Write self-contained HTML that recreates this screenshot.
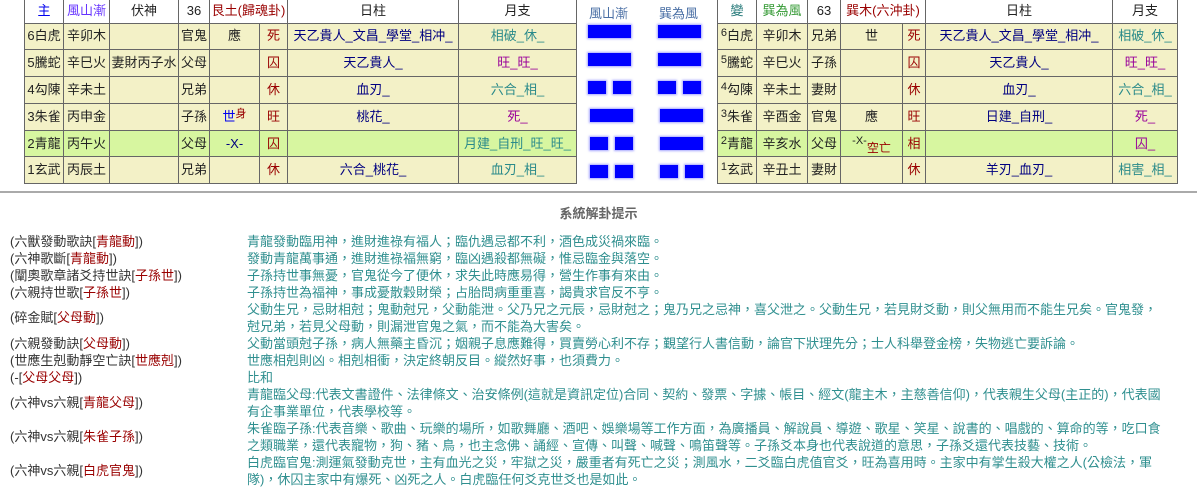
<!DOCTYPE html>
<html><head><meta charset="utf-8">
<style>
*{margin:0;padding:0;box-sizing:border-box}
body{width:1197px;height:485px;background:#fff;font-family:"Liberation Sans","Noto Sans CJK TC",sans-serif;font-size:13px;color:#222;position:relative;overflow:hidden}
table.g{position:absolute;top:-1px;border-collapse:collapse;table-layout:fixed}
table.g td{border:1px solid #666;text-align:center;height:26.8px;padding:0;white-space:nowrap;background:#f3f1c7;line-height:14px}
table.g tr.h td{background:#fff;height:24px;border-top:none}
table.g tr.gr td{background:#d7f6a0}
.b{color:#0000ee}.p{color:#6633ff}.r{color:#990000}.n{color:#000080}.t{color:#2a8a8a}.m{color:#990099}.gn{color:#339933}.tl{color:#227777}
sup{font-size:11px;vertical-align:4px;line-height:0}
sub{font-size:12px;vertical-align:-4px;line-height:0}
.bar{position:absolute;height:13px;background:#0000ff;box-shadow:0 0 2px 1px rgba(80,80,255,.5)}
.ht{position:absolute;top:3px;color:#4a6fa5;font-size:13px}
hr{position:absolute;left:0;top:191px;width:1197px;border:none;border-top:2px solid #aaa}
.tt{position:absolute;top:203px;left:0;width:1197px;text-align:center;font-weight:bold;color:#666;font-size:13px}
.lab{position:absolute;left:10px;color:#333;line-height:17px;white-space:nowrap}
.lab span{color:#990000}
.txt{position:absolute;left:247px;top:233px;color:#2f8f8f;line-height:17px;white-space:nowrap}
</style></head><body>
<table class="g" style="left:24px;width:552px">
<colgroup><col style="width:39px"><col style="width:46px"><col style="width:69px"><col style="width:31px"><col style="width:50px"><col style="width:28px"><col style="width:171px"><col style="width:118px"></colgroup>
<tr class="h"><td class="b">主</td><td class="p">風山漸</td><td>伏神</td><td>36</td><td colspan="2" class="r">艮土(歸魂卦)</td><td>日柱</td><td>月支</td></tr>
<tr><td>6白虎</td><td>辛卯木</td><td></td><td>官鬼</td><td>應</td><td class="r">死</td><td class="n">天乙貴人_文昌_學堂_相冲_</td><td class="t">相破_休_</td></tr>
<tr><td>5騰蛇</td><td>辛巳火</td><td>妻財丙子水</td><td>父母</td><td></td><td class="r">囚</td><td class="n">天乙貴人_</td><td class="m">旺_旺_</td></tr>
<tr><td>4勾陳</td><td>辛未土</td><td></td><td>兄弟</td><td></td><td class="r">休</td><td class="n">血刃_</td><td class="t">六合_相_</td></tr>
<tr><td>3朱雀</td><td>丙申金</td><td></td><td>子孫</td><td><span class="b">世</span><sup class="r">身</sup></td><td class="r">旺</td><td class="n">桃花_</td><td class="m">死_</td></tr>
<tr class="gr"><td>2青龍</td><td>丙午火</td><td></td><td>父母</td><td class="n">-X-</td><td class="r">囚</td><td></td><td class="t">月建_自刑_旺_旺_</td></tr>
<tr><td>1玄武</td><td>丙辰土</td><td></td><td>兄弟</td><td></td><td class="r">休</td><td class="n">六合_桃花_</td><td class="t">血刃_相_</td></tr>
</table>

<div class="ht" style="left:589px">風山漸</div>
<div class="ht" style="left:659px">巽為風</div>
<div class="bar" style="left:588px;top:25px;width:43px"></div>
<div class="bar" style="left:588px;top:53px;width:43px"></div>
<div class="bar" style="left:588px;top:81px;width:18px"></div><div class="bar" style="left:613px;top:81px;width:18px"></div>
<div class="bar" style="left:590px;top:109px;width:43px"></div>
<div class="bar" style="left:590px;top:137px;width:18px"></div><div class="bar" style="left:615px;top:137px;width:18px"></div>
<div class="bar" style="left:590px;top:165px;width:18px"></div><div class="bar" style="left:615px;top:165px;width:18px"></div>

<div class="bar" style="left:658px;top:25px;width:43px"></div>
<div class="bar" style="left:658px;top:53px;width:43px"></div>
<div class="bar" style="left:658px;top:81px;width:18px"></div><div class="bar" style="left:683px;top:81px;width:18px"></div>
<div class="bar" style="left:660px;top:109px;width:43px"></div>
<div class="bar" style="left:660px;top:137px;width:43px"></div>
<div class="bar" style="left:660px;top:165px;width:18px"></div><div class="bar" style="left:685px;top:165px;width:18px"></div>

<table class="g" style="left:717px;width:460px">
<colgroup><col style="width:39px"><col style="width:51px"><col style="width:33px"><col style="width:62px"><col style="width:23px"><col style="width:187px"><col style="width:65px"></colgroup>
<tr class="h"><td class="tl">變</td><td class="gn">巽為風</td><td>63</td><td colspan="2" class="r">巽木(六沖卦)</td><td>日柱</td><td>月支</td></tr>
<tr><td><sup>6</sup>白虎</td><td>辛卯木</td><td>兄弟</td><td>世</td><td class="r">死</td><td class="n">天乙貴人_文昌_學堂_相冲_</td><td class="t">相破_休_</td></tr>
<tr><td><sup>5</sup>騰蛇</td><td>辛巳火</td><td>子孫</td><td></td><td class="r">囚</td><td class="n">天乙貴人_</td><td class="m">旺_旺_</td></tr>
<tr><td><sup>4</sup>勾陳</td><td>辛未土</td><td>妻財</td><td></td><td class="r">休</td><td class="n">血刃_</td><td class="t">六合_相_</td></tr>
<tr><td><sup>3</sup>朱雀</td><td>辛酉金</td><td>官鬼</td><td>應</td><td class="r">旺</td><td class="n">日建_自刑_</td><td class="m">死_</td></tr>
<tr class="gr"><td><sup>2</sup>青龍</td><td>辛亥水</td><td>父母</td><td><sup>-X-</sup><sub class="r">空亡</sub></td><td class="r">相</td><td></td><td class="m">囚_</td></tr>
<tr><td><sup>1</sup>玄武</td><td>辛丑土</td><td>妻財</td><td></td><td class="r">休</td><td class="n">羊刃_血刃_</td><td class="t">相害_相_</td></tr>
</table>

<hr>
<div class="tt">系統解卦提示</div>

<div class="lab" style="top:233px">(六獸發動歌訣[<span>青龍動</span>])</div>
<div class="lab" style="top:250px">(六神歌斷[<span>青龍動</span>])</div>
<div class="lab" style="top:267px">(闡奧歌章諸爻持世訣[<span>子孫世</span>])</div>
<div class="lab" style="top:284px">(六親持世歌[<span>子孫世</span>])</div>
<div class="lab" style="top:309px">(碎金賦[<span>父母動</span>])</div>
<div class="lab" style="top:335px">(六親發動訣[<span>父母動</span>])</div>
<div class="lab" style="top:352px">(世應生剋動靜空亡訣[<span>世應剋</span>])</div>
<div class="lab" style="top:369px">(-[<span>父母父母</span>])</div>
<div class="lab" style="top:394px">(六神vs六親[<span>青龍父母</span>])</div>
<div class="lab" style="top:428px">(六神vs六親[<span>朱雀子孫</span>])</div>
<div class="lab" style="top:462px">(六神vs六親[<span>白虎官鬼</span>])</div>

<div class="txt">青龍發動臨用神，進財進祿有福人；臨仇遇忌都不利，酒色成災禍來臨。<br>發動青龍萬事通，進財進祿福無窮，臨凶遇殺都無礙，惟忌臨金與落空。<br>子孫持世事無憂，官鬼從今了便休，求失此時應易得，營生作事有來由。<br>子孫持世為福神，事成憂散穀財榮；占胎問病重重喜，謁貴求官反不亨。<br>父動生兄，忌財相尅；鬼動尅兄，父動能泄。父乃兄之元辰，忌財尅之；鬼乃兄之忌神，喜父泄之。父動生兄，若見財爻動，則父無用而不能生兄矣。官鬼發，<br>尅兄弟，若見父母動，則漏泄官鬼之氣，而不能為大害矣。<br>父動當頭尅子孫，病人無藥主昏沉；姻親子息應難得，買賣勞心利不存；覲望行人書信動，論官下狀理先分；士人科舉登金榜，失物逃亡要訴論。<br>世應相剋則凶。相剋相衝，決定終朝反目。縱然好事，也須費力。<br>比和<br>青龍臨父母:代表文書證件、法律條文、治安條例(這就是資訊定位)合同、契約、發票、字據、帳目、經文(龍主木，主慈善信仰)，代表親生父母(主正的)，代表國<br>有企事業單位，代表學校等。<br>朱雀臨子孫:代表音樂、歌曲、玩樂的場所，如歌舞廳、酒吧、娛樂場等工作方面，為廣播員、解說員、導遊、歌星、笑星、說書的、唱戲的、算命的等，吃口食<br>之類職業，還代表寵物，狗、豬、鳥，也主念佛、誦經、宣傳、叫聲、喊聲、鳴笛聲等。子孫爻本身也代表說道的意思，子孫爻還代表技藝、技術。<br>白虎臨官鬼:測運氣發動克世，主有血光之災，牢獄之災，嚴重者有死亡之災；測風水，二爻臨白虎值官爻，旺為喜用時。主家中有掌生殺大權之人(公檢法，軍<br>隊)，休囚主家中有爆死、凶死之人。白虎臨任何爻克世爻也是如此。</div>
</body></html>
